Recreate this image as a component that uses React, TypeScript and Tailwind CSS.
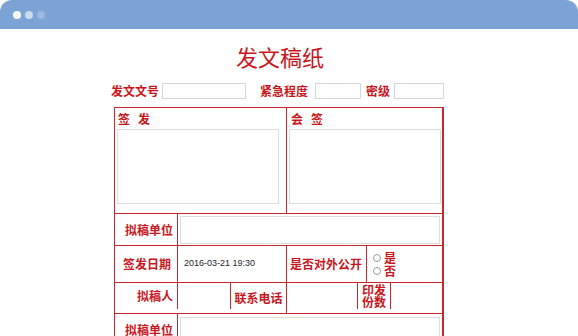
import React from "react";

const red = "text-[#c8161d]";

export default function App() {
  return (
    <div className="w-[578px] h-[336px] overflow-hidden bg-white" style={{ fontFamily: '"Noto Sans CJK SC", "Liberation Sans", sans-serif' }}>
      <div className="h-[29px] bg-[#7ca3d6] rounded-t-[12px] flex items-center pl-[13px] gap-[4px]">
        <span className="w-[8px] h-[8px] rounded-full bg-white" />
        <span className="w-[8px] h-[8px] rounded-full bg-white/60" />
        <span className="w-[8px] h-[8px] rounded-full bg-white/25" />
      </div>

      <div className={`mt-[12px] h-[30px] leading-[30px] text-center text-[22px] ${red} pr-[18px]`}>发文稿纸</div>

      <div className={`mt-[11px] flex items-center h-[18px] text-[12px] font-semibold ${red} pl-[111px]`}>
        <span className="leading-none">发文文号</span>
        <span className="ml-[3px] w-[84px] h-[16px] border border-[#d6d6d6]" />
        <span className="ml-[14px] leading-none">紧急程度</span>
        <span className="ml-[7px] w-[46px] h-[16px] border border-[#d6d6d6]" />
        <span className="ml-[5px] leading-none">密级</span>
        <span className="ml-[4px] w-[50px] h-[16px] border border-[#d6d6d6]" />
      </div>

      <div className={`ml-[114px] mt-[7px] w-[330px] border border-[#c8262c] border-r-2 text-[12px] font-semibold ${red}`}>
        {/* sign row */}
        <div className="flex h-[106px] border-b border-[#c8262c]">
          <div className="w-[172px] border-r border-[#c8262c] pl-[2px] pt-[3px] flex flex-col">
            <div className="leading-[16px] pl-[1px] flex gap-[8px]"><span>签</span><span>发</span></div>
            <div className="mt-[2px] w-[162px] h-[75px] border border-[#dcdcdc]" />
          </div>
          <div className="flex-1 pl-[2px] pt-[3px] flex flex-col">
            <div className="leading-[16px] pl-[2px] flex gap-[8px]"><span>会</span><span>签</span></div>
            <div className="mt-[2px] w-[152px] h-[75px] border border-[#dcdcdc]" />
          </div>
        </div>
        {/* 拟稿单位 */}
        <div className="flex h-[32px] border-b border-[#c8262c]">
          <div className="w-[63px] border-r border-[#c8262c] flex items-center justify-end pr-[4px] whitespace-nowrap">拟稿单位</div>
          <div className="flex-1 flex items-center pl-[2px]">
            <div className="w-[260px] h-[28px] border border-[#dcdcdc]" />
          </div>
        </div>
        {/* 签发日期 */}
        <div className="flex h-[37px] border-b border-[#c8262c]">
          <div className="w-[63px] border-r border-[#c8262c] flex items-center justify-end pr-[6px] whitespace-nowrap">签发日期</div>
          <div className="w-[109px] border-r border-[#c8262c] flex items-center pl-[6px] text-[9px] font-normal text-[#222]" style={{ fontFamily: '"Liberation Sans", sans-serif' }}>2016-03-21 19:30</div>
          <div className="w-[80px] border-r border-[#c8262c] flex items-center pl-[3px] whitespace-nowrap">是否对外公开</div>
          <div className="flex-1 flex flex-col justify-center pl-[6px] text-[12px] leading-[13px]">
            <div className="flex items-center gap-[3px]"><span className="w-[8px] h-[8px] rounded-full border border-[#9a9a9a]" />是</div>
            <div className="flex items-center gap-[3px]"><span className="w-[8px] h-[8px] rounded-full border border-[#9a9a9a]" />否</div>
          </div>
        </div>
        {/* 拟稿人 */}
        <div className="flex h-[31px] border-b border-[#c8262c]">
          <div className="w-[63px] border-r border-[#c8262c] flex items-center justify-end pr-[4px] mb-[4px] whitespace-nowrap">拟稿人</div>
          <div className="w-[53px] border-r border-[#c8262c] mb-[4px]" />
          <div className="w-[56px] border-r border-[#c8262c] flex items-center justify-center whitespace-nowrap">联系电话</div>
          <div className="w-[71px] border-r border-[#c8262c] mb-[4px]" />
          <div className="w-[33px] border-r border-[#c8262c] flex flex-col items-center justify-center text-[12px] leading-[12px] mb-[4px]">
            <span>印发</span>
            <span>份数</span>
          </div>
          <div className="flex-1" />
        </div>
        {/* 拟稿单位 2 */}
        <div className="flex h-[40px]">
          <div className="w-[63px] border-r border-[#c8262c] flex items-start justify-end pr-[4px] pt-[7px] whitespace-nowrap">拟稿单位</div>
          <div className="flex-1 pl-[2px] pt-[3px]">
            <div className="w-[260px] h-[30px] border border-[#dcdcdc]" />
          </div>
        </div>
      </div>
    </div>
  );
}
